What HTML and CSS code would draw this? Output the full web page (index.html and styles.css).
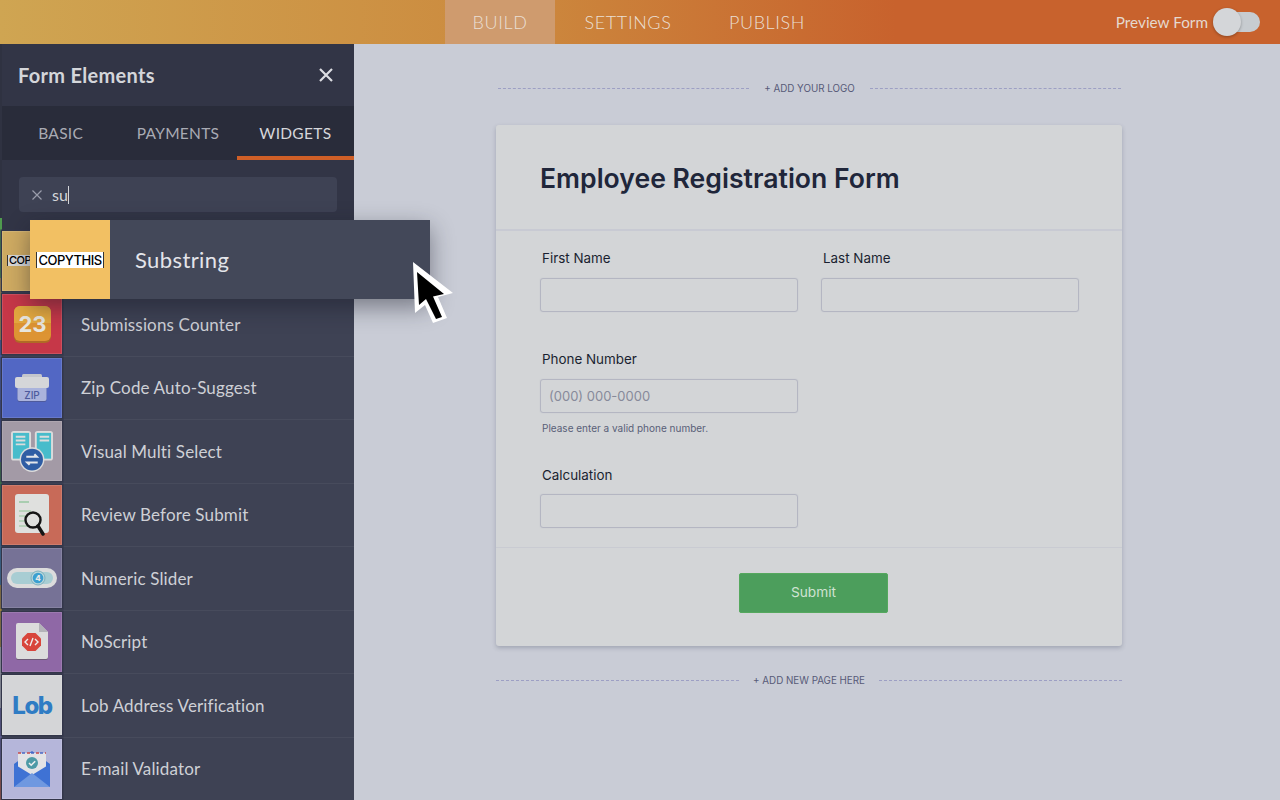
FILE: index.html
```html
<!DOCTYPE html>
<html lang="en">
<head>
<meta charset="utf-8">
<title>Form Builder</title>
<link rel="stylesheet" href="styles.css">
</head>
<body>
<header class="topbar">
  <nav class="topnav">
    <a class="topnav-item is-active">BUILD</a>
    <a class="topnav-item">SETTINGS</a>
    <a class="topnav-item">PUBLISH</a>
  </nav>
  <div class="preview">
    <span>Preview Form</span>
    <span class="toggle"><span class="toggle-knob"></span></span>
  </div>
</header>
<main class="workspace">
  <aside class="sidebar">
    <div class="side-head">
      <h2>Form Elements</h2>
      <svg class="side-close" width="16" height="16" viewBox="0 0 16 16"><path d="M2 2l12 12M14 2L2 14" stroke="#dcdde2" stroke-width="2.2" fill="none"/></svg>
    </div>
    <div class="side-tabs">
      <span class="side-tab">BASIC</span>
      <span class="side-tab">PAYMENTS</span>
      <span class="side-tab is-active">WIDGETS</span>
    </div>
    <div class="side-search">
      <div class="search-box">
        <svg width="10" height="10" viewBox="0 0 10 10"><path d="M.5.5l9 9M9.5.5l-9 9" stroke="#9a9dab" stroke-width="1.2" fill="none"/></svg>
        <span class="search-text">su</span><span class="caret"></span>
      </div>
    </div>
    <ul class="widget-list">
      <li class="widget">
        <span class="thumb t-copy"><span class="copy-tag small">COPYTHIS</span></span>
        <span class="widget-name">Substring</span>
      </li>
      <li class="widget">
        <span class="thumb t-red">
          <svg width="37" height="37" viewBox="0 0 37 37"><rect x="0" y="1" width="37" height="36" rx="6" fill="#b06a26"/><rect x="0" y="0" width="37" height="35" rx="6" fill="#dd9433"/><path d="M0 17V6a6 6 0 0 1 6-6h25a6 6 0 0 1 6 6v11z" fill="#e3a83f"/><text x="18.500" y="26" class="svg-23">23</text></svg>
        </span>
        <span class="widget-name">Submissions Counter</span>
      </li>
      <li class="widget">
        <span class="thumb t-blue">
          <svg width="34" height="28" viewBox="0 0 34 28"><rect x="2.500" y="13" width="29" height="15" rx="2" fill="#4e5a9c"/><rect x="2.500" y="12" width="29" height="15" rx="2" fill="#aab3dc"/><rect x="7" y="0" width="20" height="5" rx="1.500" fill="#c4c6cc"/><rect x="0" y="3" width="34" height="11" rx="2" fill="#d5d6d9"/><text x="17" y="24.500" class="svg-zip">ZIP</text></svg>
        </span>
        <span class="widget-name">Zip Code Auto-Suggest</span>
      </li>
      <li class="widget">
        <span class="thumb t-mauve">
          <svg width="42" height="41" viewBox="0 0 44 43"><rect x="0" y="0" width="21" height="31" rx="3" fill="#dcdcdc"/><rect x="25" y="0" width="19" height="31" rx="3" fill="#dcdcdc"/><rect x="2" y="2" width="17" height="27" fill="#47bccb"/><rect x="27" y="2" width="15" height="27" fill="#47bccb"/><path d="M5 6h10M5 10h10M5 14h10M30 6h10M30 10h10" stroke="#dcdcdc" stroke-width="2"/><circle cx="22" cy="30" r="13" fill="#dcdcdc"/><circle cx="22" cy="30" r="11.500" fill="#2f5da4"/><path d="M16 27h11l-2.500-2.500M28 33H17l2.500 2.500" stroke="#e4e6ea" stroke-width="2.200" fill="none"/></svg>
        </span>
        <span class="widget-name">Visual Multi Select</span>
      </li>
      <li class="widget">
        <span class="thumb t-coral">
          <svg width="36" height="42" viewBox="0 0 36 42"><rect x="1" y="0" width="34" height="39" rx="3" fill="#dfe0de"/><path d="M5 8h10" stroke="#a9cdb0" stroke-width="2"/><path d="M5 17h12M5 22h9M5 27h9M5 32h12" stroke="#b9d3bb" stroke-width="2"/><circle cx="19" cy="26" r="7.500" fill="#dfe0de" stroke="#151515" stroke-width="2.400"/><path d="M24 32l5 8" stroke="#151515" stroke-width="3.400" stroke-linecap="round"/></svg>
        </span>
        <span class="widget-name">Review Before Submit</span>
      </li>
      <li class="widget">
        <span class="thumb t-slate">
          <svg width="50" height="20" viewBox="0 0 50 20"><rect width="50" height="20" rx="10" fill="#dcdcdc"/><rect x="4" y="4" width="42" height="12" rx="6" fill="#a8cdd3"/><circle cx="31" cy="10" r="7" fill="#b9d6da" stroke="#7fb0bd"/><circle cx="31" cy="10" r="5.300" fill="#3c9fd0"/><text x="31" y="13" class="svg-num">4</text></svg>
        </span>
        <span class="widget-name">Numeric Slider</span>
      </li>
      <li class="widget">
        <span class="thumb t-purple">
          <svg width="34" height="38" viewBox="0 0 34 38"><path d="M3 1h21l9 9v25a2 2 0 0 1-2 2H3a2 2 0 0 1-2-2V3a2 2 0 0 1 2-2z" fill="#6e5a76"/><path d="M3 0h21l9 9v25a2 2 0 0 1-2 2H3a2 2 0 0 1-2-2V2a2 2 0 0 1 2-2z" fill="#dcdcdc"/><path d="M24 0l9 9h-9z" fill="#b3b3b8"/><path d="M12.500 10h8l5.500 5.500v7L20.500 28h-8L7 22.500v-7z" fill="#d8453b"/><path d="M13 16l-3 3 3 3M20 16l3 3-3 3M18 15l-3 8" stroke="#eee" stroke-width="1.400" fill="none"/></svg>
        </span>
        <span class="widget-name">NoScript</span>
      </li>
      <li class="widget">
        <span class="thumb t-white"><span class="lob">Lob</span></span>
        <span class="widget-name">Lob Address Verification</span>
      </li>
      <li class="widget">
        <span class="thumb t-lilac">
          <svg width="36" height="37" viewBox="0 0 36 37"><path d="M0 14L18 1l18 13v22a1 1 0 0 1-1 1H1a1 1 0 0 1-1-1z" fill="#3a6fd0"/><path d="M4 3h28v24H4z" fill="#e3e3e6"/><path d="M4 3h28" stroke="#c64a4a" stroke-width="1.400" stroke-dasharray="3 6"/><path d="M8 3h24" stroke="#4a6ac6" stroke-width="1.400" stroke-dasharray="3 6"/><circle cx="18" cy="13" r="6" fill="#4e9aa6"/><path d="M15 13l2.200 2.200 4-4" stroke="#eee" stroke-width="1.600" fill="none"/><path d="M0 14l18 11 18-11v23H0z" fill="#3f72d4"/><path d="M0 37l18-14 18 14z" fill="#6f98e0"/></svg>
        </span>
        <span class="widget-name">E-mail Validator</span>
      </li>
    </ul>
  </aside>
  <section class="canvas">
    <div class="add-row add-logo"><i></i><span>+ ADD YOUR LOGO</span><i></i></div>
    <form class="card">
      <h1 class="card-title">Employee Registration Form</h1>
      <div class="fields">
        <div class="row-two">
          <label class="field"><span class="lbl">First Name</span><span class="inp"></span></label>
          <label class="field"><span class="lbl">Last Name</span><span class="inp"></span></label>
        </div>
        <label class="field f-phone"><span class="lbl">Phone Number</span><span class="inp ph">(000) 000-0000</span><span class="hint">Please enter a valid phone number.</span></label>
        <label class="field f-calc"><span class="lbl">Calculation</span><span class="inp"></span></label>
      </div>
      <div class="card-foot"><button type="button" class="submit">Submit</button></div>
    </form>
    <div class="add-row add-page"><i></i><span>+ ADD NEW PAGE HERE</span><i></i></div>
  </section>
</main>
<div class="drag-item">
  <span class="drag-thumb"><span class="copy-tag">COPYTHIS</span></span>
  <span class="drag-name">Substring</span>
</div>
<svg class="cursor" width="42" height="62" viewBox="0 0 42 62"><path d="M0 0L2 51l10-8 8 18 14-5-9-21 15-4z" fill="#fff"/><path d="M4 10L6 43l7-6 10 20 6-2-9-20.500L31 32z" fill="#000"/></svg>
</body>
</html>
```
FILE: styles.css
```css
* { box-sizing: border-box; }
html, body { margin: 0; height: 100%; }
body { width: 1280px; height: 800px; overflow: hidden; position: relative; background: #c9ccd6; font-family: "Lato", "Noto Sans", sans-serif; }

.topbar { height: 44px; display: flex; align-items: center; background: linear-gradient(90deg, #cfa552 0%, #cc8a3e 40%, #c8622d 70%, #c8622d 100%); color: #e6d5c6; }
.topnav { display: flex; margin-left: 445px; height: 100%; }
.topnav-item { display: flex; align-items: center; justify-content: center; font-size: 18px; font-weight: 300; letter-spacing: .6px; color: #eadfd3; width: 111px; }
.topnav-item:nth-child(2) { width: 146px; }
.topnav-item:nth-child(3) { width: 132px; }
.topnav-item.is-active { background: #cf9b6e; width: 110px; }
.preview { margin-left: auto; margin-right: 20px; display: flex; align-items: center; gap: 12px; font-size: 15.300px; color: #e5d9cf; }
.toggle { position: relative; width: 40px; height: 20px; border-radius: 10px; background: #c7ccd0; display: block; }
.toggle-knob { position: absolute; left: -7px; top: -4px; width: 28px; height: 28px; border-radius: 50%; background: #d4d6d9; box-shadow: 0 1px 3px rgba(0,0,0,.3); }

.workspace { display: flex; height: 756px; }
.sidebar { width: 354px; flex: none; padding-left: 2px; display: flex; flex-direction: column; overflow: hidden;
  background: linear-gradient(180deg, #2f3241 0 174px, #4f9a4e 174px 234px, #c9a24e 234px 296px, #4a62b4 296px 356px, #3f4f96 356px 418px, #3f8048 418px 479px, #3f82b0 479px 541px, #c09a3c 541px 603px, #c8cad0 603px 664px, #6e6aa8 664px 726px, #c0634e 726px) 0 0 / 2px 100% no-repeat, #2f3241; }
.side-head { height: 62px; flex: none; background: #323546; display: flex; align-items: center; justify-content: space-between; padding: 0 20px 0 16px; }
.side-head h2 { margin: 0; font-size: 20px; font-weight: 700; color: #d4d6da; letter-spacing: .3px; }
.side-tabs { height: 54px; flex: none; background: #292c3a; display: flex; }
.side-tab { flex: 1; display: flex; align-items: center; justify-content: center; font-size: 15.500px; color: #a9abb4; letter-spacing: .3px; }
.side-tab.is-active { color: #d6d7db; box-shadow: inset 0 -4px 0 #cf5f27; }
.side-search { height: 69.500px; flex: none; background: #323546; padding: 17px 17px 0; }
.search-box { height: 35px; border-radius: 4px; background: #3e4254; display: flex; align-items: center; padding-left: 13px; color: #d4d6da; font-size: 16px; }
.search-text { margin-left: 10px; }
.caret { width: 1px; height: 18px; background: #d4d6da; }
.widget-list { list-style: none; margin: 0; padding: 0; flex: 1; background: #3e4254; }
.widget { height: 63.500px; display: flex; align-items: center; border-bottom: 1px solid #474b5c; }
.thumb { width: 60px; height: 60px; flex: none; display: flex; align-items: center; justify-content: center; overflow: hidden; border: 1px solid rgba(255,255,255,.12); box-shadow: 0 0 0 1.500px #33364a; }
.widget-name { margin-left: 19px; font-size: 17px; color: #ced0d6; letter-spacing: .15px; }
.t-copy { background: #cfab62; justify-content: flex-start; padding-left: 4px; }
.t-red { background: #c63748; }
.t-blue { background: #5267c4; }
.t-mauve { background: #a39aa6; }
.t-coral { background: #c86a58; }
.t-slate { background: #767296; }
.t-purple { background: #8f68a6; }
.t-white { background: #d4d5d7; }
.t-lilac { background: #b5b6da; }
.copy-tag { background: #fff; color: #000; font-family: "Inter", sans-serif; font-size: 13px; font-weight: 500; line-height: 16px; border-left: 1px solid #333; border-right: 1px solid #333; padding: 0 1px; white-space: nowrap; letter-spacing: -.5px; }
.copy-tag.small { background: #d9d9d9; font-size: 11px; line-height: 11px; }
.lob { font-family: "Inter", sans-serif; font-weight: 800; font-size: 24px; letter-spacing: -1.400px; color: #2f7cc4; }
.svg-23 { font-family: "Inter", sans-serif; font-weight: 700; font-size: 22px; fill: #e8e6de; text-anchor: middle; }
.svg-zip { font-family: "Inter", sans-serif; font-weight: 500; font-size: 10px; fill: #4d5a9c; text-anchor: middle; }
.svg-num { font-family: "Inter", sans-serif; font-weight: 800; font-size: 8px; fill: #e8e8e8; text-anchor: middle; }

.canvas { flex: 1; display: flex; flex-direction: column; align-items: flex-start; padding-left: 142px; font-family: "Inter", sans-serif; }
.add-row { display: flex; align-items: center; font-size: 9.800px; color: #575a78; width: 626px; }
.add-row i { flex: 1; border-top: 1px dashed #9d9fc4; }
.add-logo { margin-top: 38px; height: 13px; padding: 0 1px 0 2px; }
.add-logo span { margin: 0 15px; }
.add-page { margin-top: 28px; height: 13px; }
.add-page span { margin: 0 14px; }
.card { width: 626px; height: 521px; margin-top: 30px; background: #d3d5d7; border-radius: 3px; box-shadow: 0 2px 4px rgba(70,75,100,.3); display: flex; flex-direction: column; }
.card-title { height: 106px; margin: 0; padding: 36px 44px 0; font-size: 26.600px; line-height: 34px; font-weight: 600; color: #20263a; border-bottom: 2px solid #c8cad3; }
.fields { flex: 1; padding: 0 44px; }
.row-two { display: flex; gap: 23px; padding-top: 18px; }
.field { display: block; }
.lbl { display: block; margin-left: 2px; font-size: 13.400px; line-height: 18px; font-weight: 400; color: #1a1f30; }
.inp { display: block; width: 258px; height: 34px; margin-top: 11px; border: 1px solid #b4b6c2; border-radius: 3px; box-shadow: 0 0 1px #b4b6c2; font-size: 13px; line-height: 32px; padding-left: 8px; }
.ph { color: #878a9a; }
.hint { display: block; margin: 8px 0 0 2px; font-size: 10px; line-height: 14px; color: #596078; }
.f-phone { margin-top: 38px; }
.f-calc { margin-top: 31px; }
.f-calc .inp { margin-top: 10px; }
.card-foot { height: 99px; border-top: 1px solid #c9cbd2; display: flex; justify-content: center; padding: 25px 0 0 9px; }
.submit { width: 149px; height: 40px; border: 1px solid #55a85e; border-radius: 2px; background: #4c9e5c; color: #cfe3d2; font-family: "Inter", sans-serif; font-size: 13.700px; font-weight: 400; padding: 0 0 2px; }

.drag-item { position: absolute; left: 30px; top: 220px; width: 400px; height: 79px; background: #434859; display: flex; align-items: center; box-shadow: 0 8px 22px rgba(20,22,35,.45); }
.drag-thumb { width: 80px; height: 79px; background: #f2c063; display: flex; align-items: center; justify-content: center; }
.drag-name { margin-left: 25px; font-size: 22px; color: #e4e5ea; letter-spacing: .4px; }
.cursor { position: absolute; left: 413px; top: 262px; }
```
